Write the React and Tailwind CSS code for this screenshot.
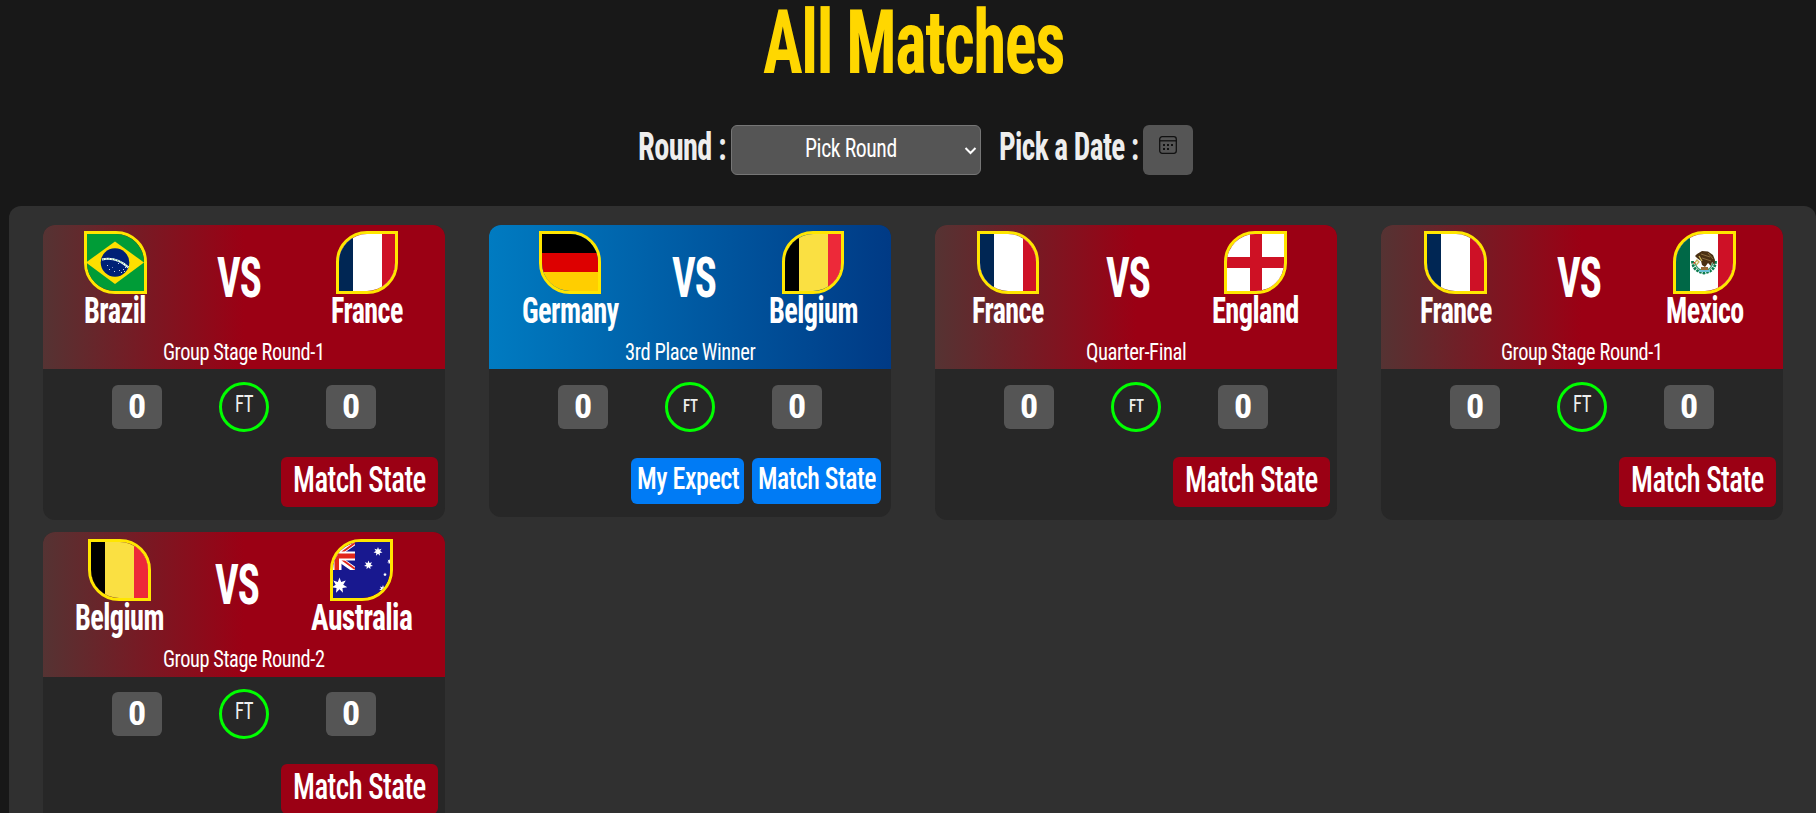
import { useLayoutEffect, useRef, useState } from "react";

// Condensed text: squeezes one line of text to a given width.
function Fit({ w, className = "", children }) {
  const ref = useRef(null);
  const [scale, setScale] = useState(1);
  useLayoutEffect(() => {
    setScale(w / ref.current.offsetWidth);
  }, [w, children]);
  return (
    <span className={"block shrink-0 whitespace-nowrap " + className} style={{ width: w }}>
      <span
        ref={ref}
        className="inline-block origin-left align-top tracking-[-0.02em] [font-stretch:75%]"
        style={{ transform: `scaleX(${scale})` }}
      >
        {children}
      </span>
    </span>
  );
}

function star(cx, cy, r, n = 7) {
  const pts = [];
  for (let i = 0; i < n * 2; i++) {
    const a = (Math.PI * i) / n - Math.PI / 2;
    const q = i % 2 ? r * 0.48 : r;
    pts.push(`${(cx + q * Math.cos(a)).toFixed(2)},${(cy + q * Math.sin(a)).toFixed(2)}`);
  }
  return pts.join(" ");
}

const flags = {
  Brazil: (
    <>
      <path fill="#009c37" d="M0 0h57v57H0z" />
      <path fill="#fedf00" d="M28 7.5 57 28.5 28 50-1 28.500z" />
      <circle cx="28" cy="28.500" r="14.300" fill="#002176" />
      <path d="M15 25.500q14-3 26.500 8" fill="none" stroke="#fff" strokeWidth="2" />
      <path
        d="M15.500 25.500q14-3 26 8"
        fill="none"
        stroke="#009c37"
        strokeWidth="0.700"
        strokeDasharray="1.500 1.500"
      />
      <g fill="#c5cfe8">
        <path d="M20 31h1v1h-1zM22 35h1v1h-1zM27 37h1v1h-1zM32 36h1v1h-1zM36 35h1v1h-1zM38 33h1v1h-1zM34 38h1v1h-1zM31 29h1v1h-1zM25 33h.8v.8h-.8zM37 37h1v1h-1z" />
      </g>
    </>
  ),
  France: (
    <>
      <path fill="#fff" d="M0 0h57v57H0z" />
      <path fill="#002654" d="M0 0h14v57H0z" />
      <path fill="#ce1126" d="M43 0h14v57H43z" />
    </>
  ),
  Germany: (
    <>
      <path fill="#000" d="M0 0h57v19H0z" />
      <path fill="#d00" d="M0 19h57v19H0z" />
      <path fill="#ffce00" d="M0 38h57v19H0z" />
    </>
  ),
  Belgium: (
    <>
      <path fill="#fae042" d="M0 0h57v57H0z" />
      <path fill="#000" d="M0 0h14v57H0z" />
      <path fill="#ed2939" d="M43 0h14v57H43z" />
    </>
  ),
  England: (
    <>
      <path fill="#fff" d="M0 0h57v57H0z" />
      <path fill="#ce1124" d="M23 0h12v57H23zM0 23h57v11H0z" />
    </>
  ),
  Mexico: (
    <>
      <path fill="#fff" d="M0 0h57v57H0z" />
      <path fill="#006847" d="M0 0h14v57H0z" />
      <path fill="#ce1126" d="M42 0h15v57H42z" />
      <path
        d="M16.500 27q0 10 11.500 12 11.500-2 11.500-12"
        fill="none"
        stroke="#0b7a4b"
        strokeWidth="2.800"
        strokeDasharray="2.500 0.900"
      />
      <path d="M19 29q2 6 6 7M37 29q-2 6-6 7" fill="none" stroke="#3f9b6e" strokeWidth="1.300" />
      <path
        fill="#4a3013"
        d="M21 20 26 17 32 17.500 37 21 39 26 38.500 31 36 28 35 32 32 29 29 33 26 31 25 27 21 24 19 22z"
      />
      <path d="m25 20 9 3m-8 1 9 3m-3-8 5 6" stroke="#8f7040" strokeWidth="0.900" />
      <path d="m18 30 3-4 2 2-3 3m3-9 3 5" fill="none" stroke="#c9b458" strokeWidth="1.300" />
      <path fill="#d0342c" d="M17.500 28h1.500v1.500h-1.500z" />
      <path fill="#9a6a35" d="M25 33h7v3h-7z" />
      <path fill="#6bbfd6" d="M23 36h11v2H23z" />
    </>
  ),
  Australia: (
    <>
      <path fill="#18188f" d="M0 0h57v57H0z" />
      <path d="M-18 0 22 28M-18 28 22 0" stroke="#fff" strokeWidth="5.500" />
      <path d="M4 14 22 27M4 14 24-.5" stroke="#e1261c" strokeWidth="2" />
      <path fill="#fff" d="M0 9.500h22v9H0zM0 0h8.500v28H0z" />
      <path fill="#e1261c" d="M0 11.500h22v5H0zM1.500 0h4.500v28H1.500z" />
      <path fill="#18188f" d="M22 0h6v30h-6zM0 28h28v6H0z" />
      <g fill="#fff">
        <polygon points={star(6.5, 43.5, 8)} />
        <polygon points={star(45, 9.5, 4.6)} />
        <polygon points={star(35.5, 23, 4.6)} />
        <polygon points={star(57, 19.5, 3)} />
        <polygon points={star(52, 32.5, 2, 5)} />
        <polygon points={star(50, 47, 4)} />
      </g>
    </>
  ),
};

function Team({ name, w, side }) {
  return (
    <div className="flex flex-col items-center">
      <div
        className={
          "h-[62.600px] w-[62.600px] shrink-0 overflow-hidden border-[3px] border-[#ffe600] " +
          (side === "left" ? "rounded-tr-[31px] rounded-bl-[31px]" : "rounded-tl-[31px] rounded-br-[31px]")
        }
      >
        <svg viewBox="0 0 57 57" className="block h-[57px] w-[57px]">
          {flags[name]}
        </svg>
      </div>
      <Fit w={w} className="text-[36.600px] leading-[33.400px] font-bold">
        {name}
      </Fit>
    </div>
  );
}

function Score() {
  return (
    <div className="flex h-11 w-[50px] justify-center rounded-md bg-[#555] pr-px">
      <Fit w={18} className="text-[34px] leading-[42px] font-bold">
        0
      </Fit>
    </div>
  );
}

function MatchCard({ home, homeW, away, awayW, round, roundW, blue, smallFt }) {
  return (
    <article
      className={"flex w-[402px] flex-col overflow-hidden rounded-xl bg-[#272727] " + (blue ? "h-[292px]" : "h-[295px]")}
    >
      <header
        className={
          "flex h-[144.700px] shrink-0 flex-col " +
          (blue
            ? "bg-[linear-gradient(90deg,#007bc1,#003a85)]"
            : "bg-[linear-gradient(90deg,#553333,#9b0014_50%)]")
        }
      >
        <div className="flex h-[102.700px] justify-around pr-[7px] pl-1.5 pt-[6.700px]">
          <Team name={home} w={homeW} side="left" />
          <Fit w={44} className="pt-[16.500px] text-[55px] leading-[60px] font-bold">
            VS
          </Fit>
          <Team name={away} w={awayW} side="right" />
        </div>
        <div className="mt-[10.500px] flex justify-center">
          <Fit w={roundW} className="text-[24px] leading-7">
            {round}
          </Fit>
        </div>
      </header>
      <div className="flex items-center justify-between px-[69px] pt-[12.500px]">
        <Score />
        <div className="flex h-[50px] w-[50px] justify-center rounded-full border-[3px] border-[#0f0] text-[#eee]">
          {smallFt ? (
            <Fit w={15} className="text-[19px] leading-[41px] font-medium">
              FT
            </Fit>
          ) : (
            <Fit w={18} className="text-[24px] leading-[39px]">
              FT
            </Fit>
          )}
        </div>
        <Score />
      </div>
      {blue ? (
        <div className="mt-[26px] flex justify-end gap-2 pr-2.5">
          <button className="flex h-[46px] w-[113px] justify-center rounded-md bg-[#007bf5]">
            <Fit w={102} className="text-[31px] leading-[42px] font-medium">
              My Expect
            </Fit>
          </button>
          <button className="flex h-[46px] w-[129px] justify-center rounded-md bg-[#007bf5]">
            <Fit w={118} className="text-[31px] leading-[42px] font-medium">
              Match State
            </Fit>
          </button>
        </div>
      ) : (
        <div className="mt-[25px] flex justify-end pr-[7px]">
          <button className="flex h-[50px] w-[157px] justify-center rounded-md bg-[#9b0014]">
            <Fit w={133} className="text-[36px] leading-[47px] font-medium">
              Match State
            </Fit>
          </button>
        </div>
      )}
    </article>
  );
}

const matches = [
  { home: "Brazil", homeW: 62, away: "France", awayW: 72, round: "Group Stage Round-1", roundW: 162 },
  { home: "Germany", homeW: 97, away: "Belgium", awayW: 89, round: "3rd Place Winner", roundW: 130, blue: true, smallFt: true },
  { home: "France", homeW: 72, away: "England", awayW: 87, round: "Quarter-Final", roundW: 100, smallFt: true },
  { home: "France", homeW: 72, away: "Mexico", awayW: 78, round: "Group Stage Round-1", roundW: 162 },
  { home: "Belgium", homeW: 89, away: "Australia", awayW: 101, round: "Group Stage Round-2", roundW: 162 },
];

export default function App() {
  return (
    <div className="h-[813px] overflow-hidden bg-[#181818] font-[Roboto,sans-serif] text-white">
      <h1 className="flex justify-center pl-[10px] text-[#ffd700]">
        <Fit w={301} className="text-[88.500px] leading-[87px] font-bold">
          All Matches
        </Fit>
      </h1>
      <div className="mt-[38px] flex h-[50px] items-start pl-[638px]">
        <Fit w={88} className="text-[39px] leading-[45px] font-bold text-[#eee]">
          Round :
        </Fit>
        <div className="ml-[5px] flex h-[50px] w-[250px] items-start rounded-md border border-[#767676] bg-[#555] pl-[73px]">
          <Fit w={92} className="text-[26.700px] leading-11">
            Pick Round
          </Fit>
          <svg viewBox="0 0 14 10" className="mt-5 ml-[67px] h-2.5 w-3.5" fill="none" stroke="#fff" strokeWidth="2">
            <path d="m1.500 2 5 5 5-5" />
          </svg>
        </div>
        <Fit w={139} className="ml-[18px] text-[39px] leading-[45px] font-bold text-[#eee]">
          Pick a Date :
        </Fit>
        <button className="ml-[5px] flex h-[50px] w-[50px] justify-center rounded-md bg-[#555] pt-[11px]">
          <svg viewBox="0 0 18 18" className="h-[18px] w-[18px]" fill="none" stroke="#111" strokeWidth="1.300">
            <rect x="0.700" y="0.700" width="16.600" height="16.600" rx="2.500" />
            <path d="M.7 4.800h16.600" />
            <path d="M4 9h2M8 9h2M12 9h2M4 13h2M8 13h2" strokeWidth="2" />
          </svg>
        </button>
      </div>
      <main className="mt-[31px] ml-[9px] h-[700px] rounded-t-xl bg-[#303030] pt-[18.700px] pl-[34px]">
        <div className="grid grid-cols-[repeat(4,402px)] items-start gap-x-11 gap-y-[12.200px]">
          {matches.map((m) => (
            <MatchCard key={m.home + m.away} {...m} />
          ))}
        </div>
      </main>
    </div>
  );
}
